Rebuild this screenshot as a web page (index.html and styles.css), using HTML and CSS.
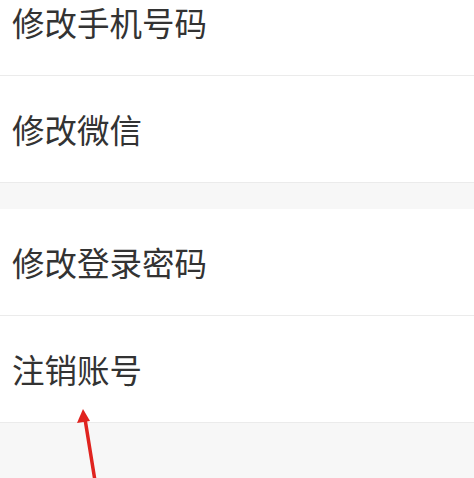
FILE: index.html
```html
<!DOCTYPE html>
<html lang="zh-CN">
<head>
<meta charset="utf-8">
<link rel="stylesheet" href="styles.css">
</head>
<body>
<div class="page">
  <div class="group">
    <div class="row">修改手机号码</div>
    <div class="row">修改微信</div>
  </div>
  <div class="group">
    <div class="row">修改登录密码</div>
    <div class="row">注销账号</div>
  </div>
  <svg class="arrow" width="40" height="80" viewBox="0 0 40 80">
    <line x1="27" y1="82" x2="16" y2="14" stroke="#e0231f" stroke-width="3.5" stroke-linecap="round"/>
    <polygon points="14,4 8,18 21,16" fill="#e0231f"/>
  </svg>
</div>
</body>
</html>
```
FILE: styles.css
```css
html, body {
  margin: 0;
  padding: 0;
  background: #f7f7f7;
  overflow: hidden;
}
.page {
  position: relative;
  width: 474px;
  height: 478px;
  overflow: hidden;
  font-family: "Noto Sans CJK SC", "Noto Sans", sans-serif;
}
.group {
  background: #fff;
  margin-bottom: 26px;
}
.group:first-child {
  margin-top: -31px;
}
.row {
  height: 106px;
  display: flex;
  align-items: center;
  padding-left: 12px;
  font-size: 32.5px;
  color: #333;
  border-bottom: 1px solid #ebebeb;
  box-sizing: content-box;
  line-height: 1;
}
.arrow {
  position: absolute;
  left: 69px;
  top: 405px;
}
```
